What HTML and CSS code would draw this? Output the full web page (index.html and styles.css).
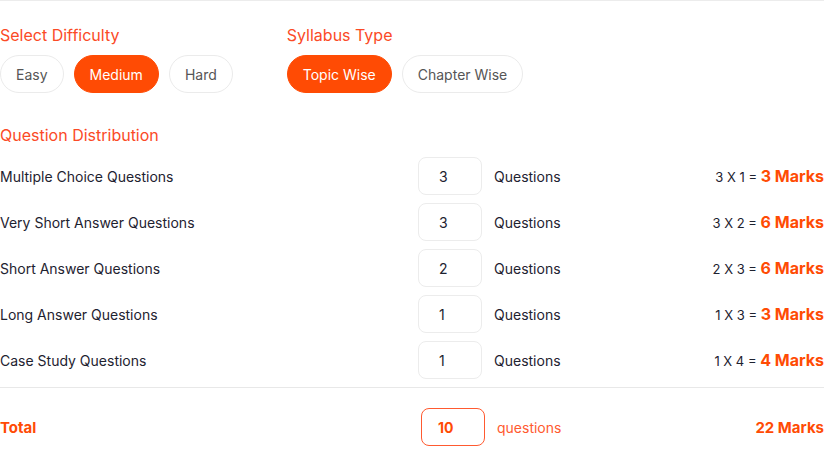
FILE: index.html
```html
<!DOCTYPE html>
<html lang="en">
<head>
<meta charset="utf-8">
<title>Question Paper Settings</title>
<link rel="stylesheet" href="styles.css">
</head>
<body>
<div class="page">
  <div class="options">
    <div class="group group-difficulty">
      <h3 class="heading">Select Difficulty</h3>
      <div class="pills">
        <button class="pill">Easy</button>
        <button class="pill active">Medium</button>
        <button class="pill">Hard</button>
      </div>
    </div>
    <div class="group">
      <h3 class="heading">Syllabus Type</h3>
      <div class="pills">
        <button class="pill active">Topic Wise</button>
        <button class="pill">Chapter Wise</button>
      </div>
    </div>
  </div>

  <h3 class="heading dist-heading">Question Distribution</h3>
  <div class="rows">
    <div class="row">
      <span class="label">Multiple Choice Questions</span>
      <span class="count"><span class="box">3</span><span class="unit">Questions</span></span>
      <span class="marks">3 X 1 = <b>3 Marks</b></span>
    </div>
    <div class="row">
      <span class="label">Very Short Answer Questions</span>
      <span class="count"><span class="box">3</span><span class="unit">Questions</span></span>
      <span class="marks">3 X 2 = <b>6 Marks</b></span>
    </div>
    <div class="row">
      <span class="label">Short Answer Questions</span>
      <span class="count"><span class="box">2</span><span class="unit">Questions</span></span>
      <span class="marks">2 X 3 = <b>6 Marks</b></span>
    </div>
    <div class="row">
      <span class="label">Long Answer Questions</span>
      <span class="count"><span class="box">1</span><span class="unit">Questions</span></span>
      <span class="marks">1 X 3 = <b>3 Marks</b></span>
    </div>
    <div class="row">
      <span class="label">Case Study Questions</span>
      <span class="count"><span class="box">1</span><span class="unit">Questions</span></span>
      <span class="marks">1 X 4 = <b>4 Marks</b></span>
    </div>
  </div>

  <div class="total row">
    <span class="label">Total</span>
    <span class="count"><span class="box">10</span><span class="unit">questions</span></span>
    <span class="marks"><b>22 Marks</b></span>
  </div>
</div>
</body>
</html>
```

FILE: styles.css
```css
* { box-sizing: border-box; }
html, body { margin: 0; padding: 0; background: #fff; }
body {
  font-family: "Inter", "Noto Sans", sans-serif;
  color: #1e2230;
  width: 824px;
}
.page {
  border-top: 1px solid #ececec;
  padding-top: 22px;
}
.options {
  display: flex;
  gap: 54px;
}
.heading {
  margin: 0;
  font-weight: 400;
  font-size: 16px;
  line-height: 24px;
  color: #fb4a26;
}
.pills {
  display: flex;
  gap: 10px;
  margin-top: 8px;
}
.pill {
  font-family: inherit;
  height: 38px;
  padding: 0 15px;
  border: 1px solid #ebebeb;
  border-radius: 19px;
  background: #fff;
  color: #565656;
  font-size: 14px;
  cursor: pointer;
}
.pill.active {
  background: #ff4b04;
  border-color: #ff4b04;
  color: #fff;
}
.dist-heading {
  margin-top: 30px;
}
.rows {
  display: flex;
  flex-direction: column;
  gap: 8px;
  margin-top: 10px;
  padding-bottom: 8px;
  border-bottom: 1px solid #e8e8e8;
}
.row {
  display: grid;
  grid-template-columns: 418px auto 1fr;
  align-items: center;
  height: 38px;
  font-size: 14px;
}
.count {
  display: flex;
  align-items: center;
  gap: 12px;
}
.box {
  width: 64px;
  height: 38px;
  border: 1px solid #ececec;
  border-radius: 8px;
  display: flex;
  align-items: center;
  padding-left: 20px;
  color: #1e2230;
}
.marks {
  text-align: right;
  font-size: 13px;
}
.marks b {
  color: #ff4b04;
  font-size: 16px;
  font-weight: 700;
}
.total {
  margin-top: 20px;
  color: #ff4b04;
}
.total .label {
  font-weight: 700;
  font-size: 15px;
}
.total .count {
  margin-left: 3px;
}
.total .box {
  border-color: #ff5a30;
  color: #ff4b04;
  font-weight: 700;
  padding-left: 16px;
}
.total .unit {
  color: #ff5a30;
}
.total .marks b {
  font-size: 15px;
}
```
